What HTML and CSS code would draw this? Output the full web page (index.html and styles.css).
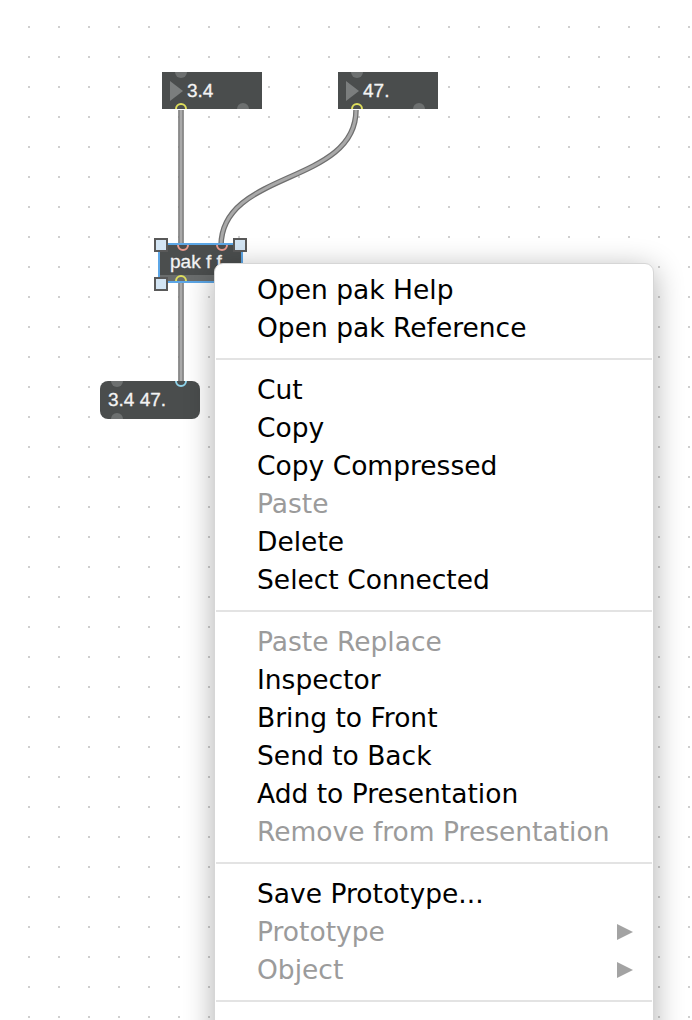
FILE: index.html
```html
<!DOCTYPE html>
<html>
<head>
<meta charset="utf-8">
<link rel="stylesheet" href="styles.css">
</head>
<body>
<div class="patcher">
  <svg class="cables" width="692" height="1020" viewBox="0 0 692 1020">
    <g class="cable">
      <path d="M181 110 L181 246"/>
      <path d="M356 110 C356 185 221 170 221 246"/>
      <path d="M181 282 L181 382"/>
    </g>
    <g class="cable-core">
      <path d="M181 110 L181 246"/>
      <path d="M356 110 C356 185 221 170 221 246"/>
      <path d="M181 282 L181 382"/>
    </g>
  </svg>

  <div class="numbox nb1">
    <span class="knob knob-tl"></span>
    <span class="knob knob-br"></span>
    <span class="tri"></span>
    <span class="val">3.4</span>
    <span class="port outlet"></span>
  </div>

  <div class="numbox nb2">
    <span class="knob knob-tl"></span>
    <span class="knob knob-br"></span>
    <span class="tri"></span>
    <span class="val">47.</span>
    <span class="port outlet"></span>
  </div>

  <div class="obj">
    <span class="port inlet in1"></span>
    <span class="port inlet in2"></span>
    <span class="obj-text">pak f f</span>
    <span class="obj-bottom"><span class="port outlet"></span></span>
  </div>
  <span class="handle h-tl"></span>
  <span class="handle h-tr"></span>
  <span class="handle h-bl"></span>

  <div class="msg">
    <span class="knob knob-tl"></span>
    <span class="knob knob-bl"></span>
    <span class="port cyan"></span>
    <span class="val">3.4 47.</span>
  </div>

  <div class="menu">
    <div class="item">Open pak Help</div>
    <div class="item">Open pak Reference</div>
    <div class="sep"></div>
    <div class="item">Cut</div>
    <div class="item">Copy</div>
    <div class="item">Copy Compressed</div>
    <div class="item off">Paste</div>
    <div class="item">Delete</div>
    <div class="item">Select Connected</div>
    <div class="sep"></div>
    <div class="item off">Paste Replace</div>
    <div class="item">Inspector</div>
    <div class="item">Bring to Front</div>
    <div class="item">Send to Back</div>
    <div class="item">Add to Presentation</div>
    <div class="item off">Remove from Presentation</div>
    <div class="sep"></div>
    <div class="item">Save Prototype...</div>
    <div class="item off sub">Prototype<span class="arrow"></span></div>
    <div class="item off sub">Object<span class="arrow"></span></div>
    <div class="sep"></div>
  </div>
</div>
</body>
</html>
```

FILE: styles.css
```css
html, body {
  margin: 0;
  padding: 0;
  background: #ffffff;
}
body {
  width: 692px;
  height: 1020px;
  overflow: hidden;
  font-family: "Liberation Sans", Arial, sans-serif;
}
.patcher {
  position: relative;
  width: 692px;
  height: 1020px;
  overflow: hidden;
  background-color: #ffffff;
  background-image: conic-gradient(at 2px 2px, transparent 75%, #cfcfcf 0);
  background-size: 30px 30px;
  background-position: 28px 26px;
}
.cables {
  position: absolute;
  left: 0;
  top: 0;
}
.cable path {
  fill: none;
  stroke: #6f6f6f;
  stroke-width: 5.5;
}
.cable-core path {
  fill: none;
  stroke: #a9a9a9;
  stroke-width: 3;
}

/* number boxes */
.numbox {
  position: absolute;
  top: 72px;
  width: 100px;
  height: 37px;
  background: #4a4d4d;
  overflow: hidden;
  display: flex;
  align-items: center;
}
.nb1 { left: 162px; }
.nb2 { left: 338px; }
.tri {
  margin-left: 8px;
  width: 0;
  height: 0;
  border-top: 10px solid transparent;
  border-bottom: 10px solid transparent;
  border-left: 13px solid #7b7e7e;
}
.val {
  margin-left: 4px;
  color: #f4f4f4;
  font-size: 19px;
  position: relative;
  -webkit-text-stroke: 0.3px #f4f4f4;
}
.knob {
  position: absolute;
  width: 12px;
  height: 12px;
  border-radius: 50%;
  background: #6d7070;
}
.numbox .knob-tl { left: 13px; top: -6px; }
.numbox .knob-br { left: 75px; top: 31px; }
.port {
  position: absolute;
  width: 8px;
  height: 8px;
  border-radius: 50%;
  border: 2px solid #dede5c;
  background: transparent;
}
.numbox .outlet { left: 13px; top: 31px; }

/* object box */
.obj {
  position: absolute;
  left: 158px;
  top: 243px;
  width: 81px;
  height: 36px;
  border: 2px solid #5ca6e6;
  background: #4b4e4e;
  overflow: hidden;
}
.obj .inlet {
  border-color: #e89a8e;
  top: -6px;
}
.obj .in1 { left: 17px; }
.obj .in2 { left: 56px; }
.obj-text {
  position: absolute;
  left: 10px;
  top: 6px;
  color: #f4f4f4;
  font-size: 19px;
  -webkit-text-stroke: 0.3px #f4f4f4;
}
.obj-bottom {
  position: absolute;
  left: 0;
  right: 0;
  bottom: 0;
  height: 6px;
  background: #6a6d6d;
  overflow: hidden;
}
.obj-bottom .outlet {
  left: 15px;
  top: 0px;
}
.handle {
  position: absolute;
  width: 10px;
  height: 10px;
  border: 2px solid #595959;
  background: #d3e5f4;
}
.h-tl { left: 154px; top: 238px; }
.h-tr { left: 233px; top: 238px; }
.h-bl { left: 154px; top: 277px; }

/* message/number output */
.msg {
  position: absolute;
  left: 100px;
  top: 381px;
  width: 100px;
  height: 38px;
  border-radius: 8px;
  background: #4a4d4d;
  overflow: hidden;
  display: flex;
  align-items: center;
}
.msg .val { margin-left: 8px; }
.msg .knob-tl { left: 11px; top: -6px; }
.msg .knob-bl { left: 11px; top: 32px; }
.msg .cyan {
  border-color: #8fd3ea;
  left: 75px;
  top: -6px;
}

/* context menu */
.menu {
  position: absolute;
  left: 214px;
  top: 263px;
  width: 440px;
  height: 800px;
  background: #ffffff;
  border: 1px solid #d6d6d6;
  border-radius: 9px 9px 0 0;
  box-shadow: 0 6px 30px rgba(0, 0, 0, 0.32);
  padding-top: 7px;
  box-sizing: border-box;
  font-family: "DejaVu Sans", "Liberation Sans", sans-serif;
}
.item {
  height: 38px;
  line-height: 38px;
  padding-left: 42px;
  padding-right: 20px;
  font-size: 26.5px;
  color: #000000;
  display: flex;
  align-items: center;
  justify-content: space-between;
}
.item.off {
  color: #9b9b9b;
}
.sep {
  height: 2px;
  background: #e3e3e3;
  margin: 11px 1px;
}
.arrow {
  width: 0;
  height: 0;
  border-top: 8.5px solid transparent;
  border-bottom: 8.5px solid transparent;
  border-left: 16px solid #a3a3a3;
}
```
